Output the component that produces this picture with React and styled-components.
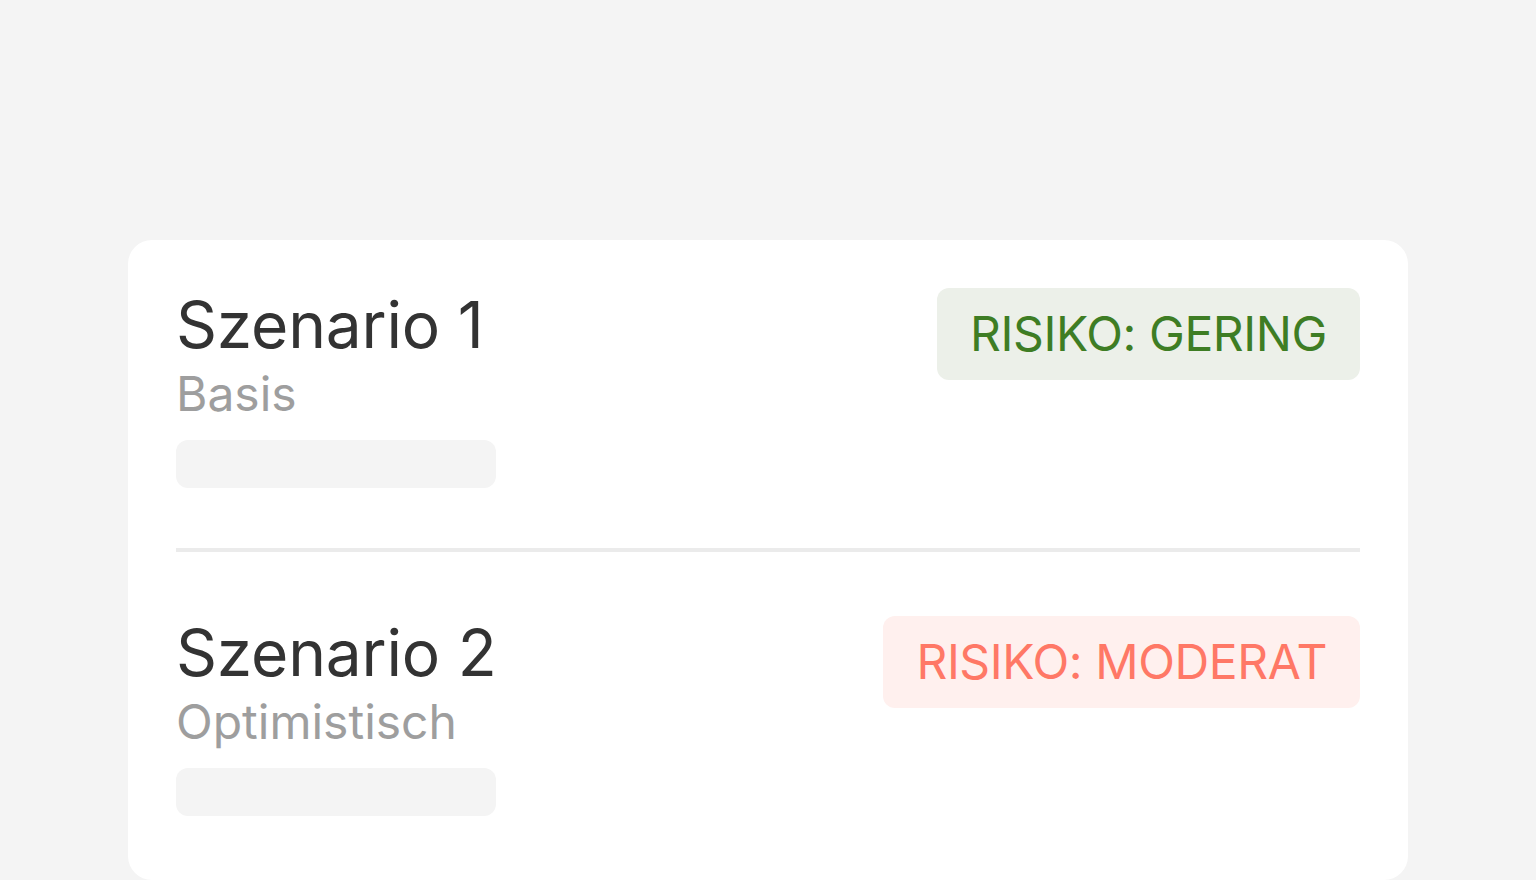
import React from "react";
import styled, { createGlobalStyle } from "styled-components";

const scenarios = [
  { id: 1, title: "Szenario 1", subtitle: "Basis", risk: "RISIKO: GERING", level: "low" },
  { id: 2, title: "Szenario 2", subtitle: "Optimistisch", risk: "RISIKO: MODERAT", level: "moderate" },
];

const riskColors = {
  low: { fg: "#3e7d24", bg: "#ecf0e9" },
  moderate: { fg: "#ff7866", bg: "#fff0ee" },
};

function App() {
  return (
    <>
      <GlobalStyle />
      <Page>
        <Card>
          {scenarios.map((s, i) => (
            <React.Fragment key={s.id}>
              {i > 0 && <Divider />}
              <Row>
                <Info>
                  <Title>{s.title}</Title>
                  <Subtitle>{s.subtitle}</Subtitle>
                  <Placeholder />
                </Info>
                <RiskBadge $level={s.level}>{s.risk}</RiskBadge>
              </Row>
            </React.Fragment>
          ))}
        </Card>
      </Page>
    </>
  );
}

// STYLED COMPONENTS

const GlobalStyle = createGlobalStyle`
  html, body {
    margin: 0;
    padding: 0;
    background: #f4f4f4;
    font-family: Inter, "Noto Sans", sans-serif;
  }
`;

const Page = styled.div`
  padding: 240px 128px 0;
`;

const Card = styled.div`
  background: #ffffff;
  border-radius: 24px;
  padding: 48px 48px 64px;
`;

const Row = styled.div`
  display: flex;
  justify-content: space-between;
  align-items: flex-start;
`;

const Info = styled.div`
  display: flex;
  flex-direction: column;
`;

const Title = styled.div`
  font-size: 64px;
  line-height: 74px;
  letter-spacing: -0.2px;
  color: #333333;
`;

const Subtitle = styled.div`
  margin-top: 4px;
  font-size: 48px;
  line-height: 56px;
  color: #9e9e9e;
`;

const Placeholder = styled.div`
  margin-top: 18px;
  width: 320px;
  height: 48px;
  border-radius: 12px;
  background: #f4f4f4;
`;

const Divider = styled.div`
  height: 4px;
  margin: 60px 0 64px;
  background: #ebebeb;
`;

const RiskBadge = styled.div`
  padding: 18px 33px;
  border-radius: 12px;
  font-size: 48px;
  line-height: 56px;
  letter-spacing: -0.4px;
  color: ${(p) => riskColors[p.$level].fg};
  background: ${(p) => riskColors[p.$level].bg};
`;

export default App;
